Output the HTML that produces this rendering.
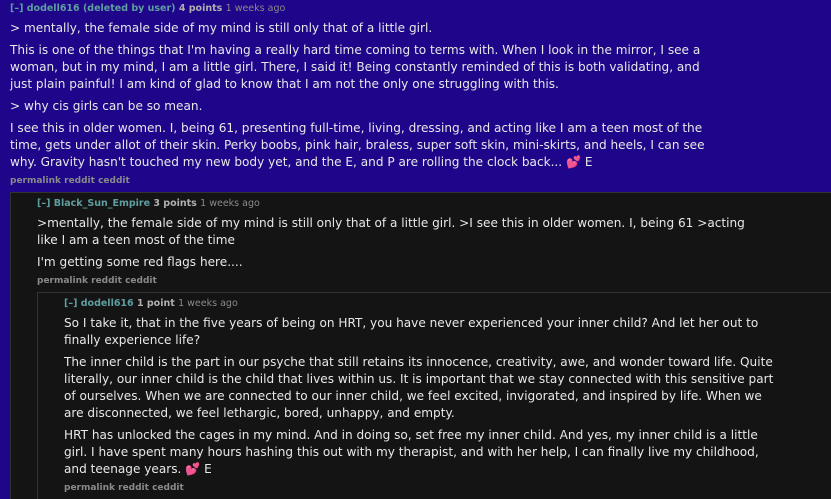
<!DOCTYPE html>
<html><head><meta charset="utf-8"><style>
html,body{margin:0;width:831px;height:499px;overflow:hidden}
body{background:#1e0589;font-family:"DejaVu Sans",Verdana,sans-serif;color:#e8e8e8;position:relative}
.h{font-size:9.5px;font-weight:bold;color:#5f9ea0;white-space:nowrap}
.h .p{color:#b0b0b0}.h .t{color:#8a8a8a;font-weight:normal}
.b p{margin:0 0 5px;font-size:12.1px;line-height:17px;white-space:nowrap}
.f{font-size:9px;font-weight:bold;color:#8a8a8a}
.box{background:#141414;border:1px solid #333;border-right:none;border-bottom:none;position:absolute;overflow:hidden}
</style></head><body>
<div style="position:absolute;left:10px;top:3px;width:720px">
<div class="h">[–] dodell616 (deleted by user) <span class="p">4 points</span> <span class="t">1 weeks ago</span></div>
<div class="b" style="margin-top:6px">
<p>&gt; mentally, the female side of my mind is still only that of a little girl.</p>
<p>This is one of the things that I'm having a really hard time coming to terms with. When I look in the mirror, I see a<br>woman, but in my mind, I am a little girl. There, I said it! Being constantly reminded of this is both validating, and<br>just plain painful! I am kind of glad to know that I am not the only one struggling with this.</p>
<p>&gt; why cis girls can be so mean.</p>
<p>I see this in older women. I, being 61, presenting full-time, living, dressing, and acting like I am a teen most of the<br>time, gets under allot of their skin. Perky boobs, pink hair, braless, super soft skin, mini-skirts, and heels, I can see<br>why. Gravity hasn't touched my new body yet, and the E, and P are rolling the clock back... <span style="color:#ff3ca0">💕</span> E</p>
</div>
<div class="f" style="margin-top:3px">permalink reddit ceddit</div>
</div>
<div class="box" style="left:10px;top:192px;width:821px;height:307px">
<div style="position:absolute;left:26px;top:5px;width:720px">
<div class="h">[–] Black_Sun_Empire <span class="p">3 points</span> <span class="t">1 weeks ago</span></div>
<div class="b" style="margin-top:6px">
<p>&gt;mentally, the female side of my mind is still only that of a little girl. &gt;I see this in older women. I, being 61 &gt;acting<br>like I am a teen most of the time</p>
<p>I'm getting some red flags here....</p>
</div>
<div class="f" style="margin-top:3px">permalink reddit ceddit</div>
</div>
<div class="box" style="left:26px;top:99px;width:795px;height:208px">
<div style="position:absolute;left:26px;top:5px;width:720px">
<div class="h">[–] dodell616 <span class="p">1 point</span> <span class="t">1 weeks ago</span></div>
<div class="b" style="margin-top:6px">
<p>So I take it, that in the five years of being on HRT, you have never experienced your inner child? And let her out to<br>finally experience life?</p>
<p>The inner child is the part in our psyche that still retains its innocence, creativity, awe, and wonder toward life. Quite<br>literally, our inner child is the child that lives within us. It is important that we stay connected with this sensitive part<br>of ourselves. When we are connected to our inner child, we feel excited, invigorated, and inspired by life. When we<br>are disconnected, we feel lethargic, bored, unhappy, and empty.</p>
<p>HRT has unlocked the cages in my mind. And in doing so, set free my inner child. And yes, my inner child is a little<br>girl. I have spent many hours hashing this out with my therapist, and with her help, I can finally live my childhood,<br>and teenage years. <span style="color:#ff3ca0">💕</span> E</p>
</div>
<div class="f" style="margin-top:3px">permalink reddit ceddit</div>
</div>
</div>
</div>
</body></html>
